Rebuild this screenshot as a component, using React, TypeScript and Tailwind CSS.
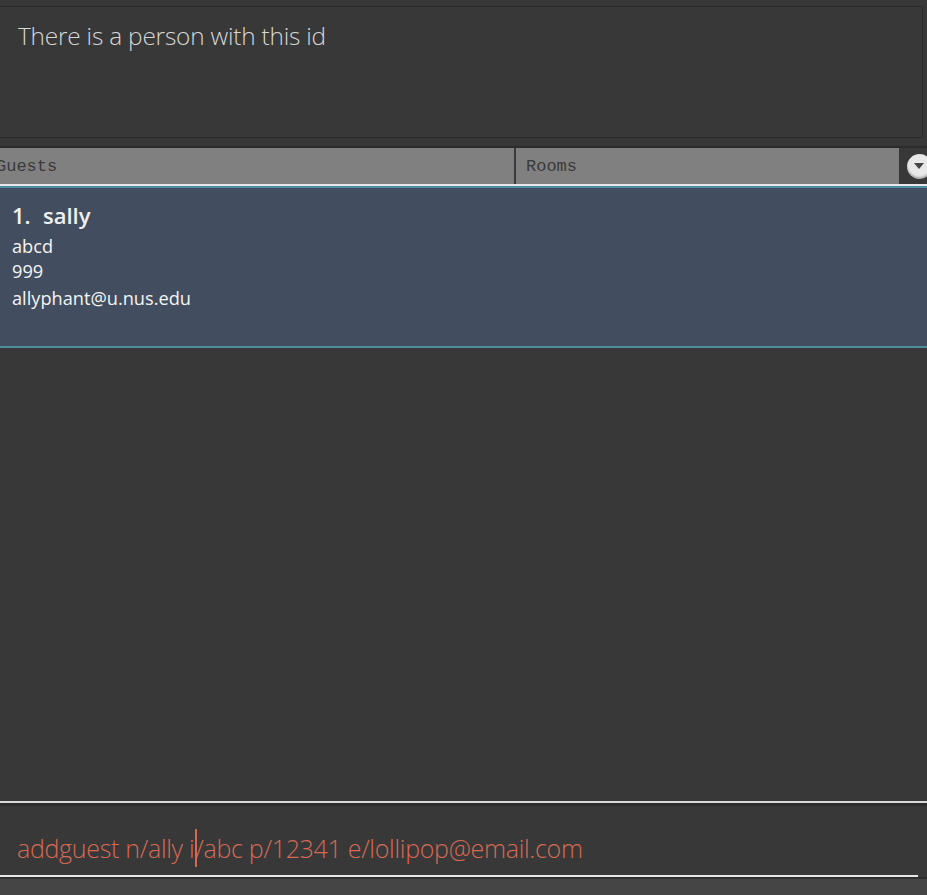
import React from "react";

// Result display, tabbed list of guests and the command box
export default function App() {
  return (
    <div className="flex h-[895px] w-[927px] flex-col overflow-hidden bg-[#383838]" style={{ fontFamily: '"Open Sans", "Noto Sans", sans-serif' }}>
      {/* result display */}
      <div className="pt-[6px] pr-[4px]">
        <div className="h-[132px] border border-l-0 border-[#2a2a2a] bg-[#383838] pl-[18px] pt-[17px]">
          <p className="text-[24.4px] font-light leading-none tracking-[-0.2px] text-[#d6d6d6]">There is a person with this id</p>
        </div>
      </div>

      <div className="mt-[8px] h-[2px] bg-[#2c2c2c]" />

      {/* tabs */}
      <div className="flex h-[36px] bg-[#383838]" style={{ fontFamily: '"Liberation Mono", monospace' }}>
        <div className="flex w-[514px] items-center bg-[#808080] pt-[2px] text-[17px] text-[#3a3a3a]">
          <span className="-ml-[4px]">Guests</span>
        </div>
        <div className="w-[2px] bg-[#3a3a3a]" />
        <div className="flex w-[383px] items-center bg-[#808080] pl-[10px] pt-[2px] text-[17px] text-[#3a3a3a]">Rooms</div>
        <div className="relative flex-1 bg-[#383838]">
          <div className="absolute left-[8px] top-[6px] flex h-[25px] w-[25px] items-center justify-center rounded-full bg-[#e8e8e8] shadow-[inset_0_-2px_2px_rgba(0,0,0,0.25)]">
            <svg width="10" height="7" viewBox="0 0 10 7" className="-ml-[1px]">
              <path d="M0 0 L10 0 L5 6 Z" fill="#444" />
            </svg>
          </div>
        </div>
      </div>
      <div className="h-[2px] bg-[#e6e6e6]" />

      {/* guest card */}
      <div className="h-[162px] border-t-2 border-b-2 border-[#4e8ea0] bg-[#424e5f] pl-[12px] pt-[14px] text-white">
        <div className="flex items-center text-[22px] font-semibold leading-[26px] text-[#f0f0f0]">
          <span className="w-[31px]">1.</span>
          <span>sally</span>
        </div>
        <div className="mt-[5px] text-[18.2px] leading-[26px] text-[#f4f4f4]">
          <div>abcd</div>
          <div className="-mt-[1px]">999</div>
          <div className="mt-[1px]">allyphant@u.nus.edu</div>
        </div>
      </div>

      <div className="flex-1" />

      {/* command box */}
      <div className="h-[2px] bg-[#d8d8d8]" />
      <div className="h-[3px] bg-[#2e2e2e]" />
      <div className="flex h-[69px] items-center pl-[17px] pb-[1px]">
        <p className="text-[25px] font-light leading-none tracking-[-0.3px] text-[#d46a55]">
          addguest n/ally i<span className="ml-[1px] -mr-[2px] inline-block h-[38px] w-[2px] translate-y-[9px] bg-[#d46a55] align-baseline" />/abc p/12341 e/lollipop@email.com
        </p>
      </div>
      <div className="mr-[9px] h-[2px] bg-[#e6e6e6]" />
      <div className="h-[2px] bg-[#2e2e2e]" />
      <div className="h-[16px] bg-[#454545]" />
    </div>
  );
}
